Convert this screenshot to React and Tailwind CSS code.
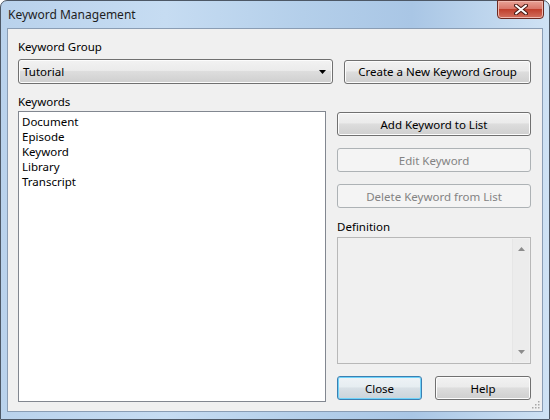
import React from "react";

const btn =
  "flex items-center justify-center rounded-[3px] border border-[#707070] bg-[linear-gradient(#f2f2f2_0%,#ebebeb_45%,#dddddd_50%,#cfcfcf_100%)] text-black shadow-[inset_0_0_0_1px_#fcfcfc]";
const btnOff =
  "flex items-center justify-center rounded-[3px] border border-[#adb2b5] bg-[#f4f4f4] text-[#838383]";

function Arrow({ up }) {
  return (
    <svg width="7" height="4" viewBox="0 0 7 4">
      <path d={up ? "M0 4 L3.5 0 L7 4 Z" : "M0 0 L3.5 4 L7 0 Z"} fill="#8c8c8c" />
    </svg>
  );
}

export default function App() {
  const keywords = ["Document", "Episode", "Keyword", "Library", "Transcript"];

  return (
    <div
      className="w-[550px] h-[420px] flex flex-col rounded-t-[7px] border border-[#4d5866] bg-[linear-gradient(to_right,#b9d2ec_0%,#c6dcf2_30%,#b4cfea_55%,#a9c6e5_75%,#cfe2f4_100%)] text-[11.5px] leading-[15px] text-black"
      style={{ fontFamily: '"Noto Sans", "Open Sans", sans-serif' }}
    >
      {/* title bar */}
      <div className="h-[27px] flex items-start justify-between pl-[7px] pr-[5px]">
        <span className="mt-[6px] text-[12px] text-[#1e1e1e]">Keyword Management</span>
        <div className="w-[47px] h-[19px] -mt-px flex items-center justify-center rounded-b-[4px] border border-[#6b2a22] bg-[linear-gradient(#e8a296_0%,#d9776a_45%,#c0402d_50%,#d2705f_100%)] shadow-[inset_0_0_0_1px_#f0b8ae]">
          <svg width="14" height="11" viewBox="0 0 14 11">
            <path d="M2 1.5 L12 9.5 M12 1.5 L2 9.5" stroke="#4a1a14" strokeWidth="4" strokeLinecap="round" />
            <path d="M2 1.5 L12 9.5 M12 1.5 L2 9.5" stroke="#ffffff" strokeWidth="2" strokeLinecap="round" />
          </svg>
        </div>
      </div>

      {/* client area */}
      <div className="relative mx-[6px] flex-1 border border-[#8a9db4] bg-[#f0f0f0] pl-[10px] pr-[11px] pt-[10px]">
        <div>Keyword Group</div>
        <div className="mt-[5px] flex items-center gap-[11px]">
          <div className={`${btn} w-[315px] h-[25px] !justify-between pl-[4px] pr-[6px]`}>
            <span>Tutorial</span>
            <svg width="7" height="4" viewBox="0 0 7 4">
              <path d="M0 0 L7 0 L3.5 4 Z" fill="#000" />
            </svg>
          </div>
          <div className={`${btn} w-[187px] h-[24px]`}>Create a New Keyword Group</div>
        </div>

        <div className="mt-[10px]">Keywords</div>
        <div className="mt-[2px] flex gap-[11px]">
          <div className="w-[308px] h-[291px] border border-[#828790] bg-white pl-[3px] pt-[2px]">
            {keywords.map((k) => (
              <div key={k}>{k}</div>
            ))}
          </div>

          <div className="w-[194px] flex flex-col">
            <div className={`${btn} mt-px h-[24px]`}>Add Keyword to List</div>
            <div className={`${btnOff} mt-[12px] h-[24px]`}>Edit Keyword</div>
            <div className={`${btnOff} mt-[12px] h-[24px]`}>Delete Keyword from List</div>
            <div className="mt-[11px]">Definition</div>
            <div className="mt-[3px] h-[127px] flex justify-end border border-[#b8b8b8] bg-[#f0f0f0] p-px">
              <div className="w-[17px] flex flex-col items-center justify-between border-l border-[#e6e6e6] bg-[#ececec] py-[8px]">
                <Arrow up />
                <Arrow />
              </div>
            </div>
            <div className="mt-[12px] flex justify-between">
              <div className="w-[85px] h-[24px] flex items-center justify-center rounded-[3px] border border-[#3c7fb1] bg-[linear-gradient(#eef3f6_0%,#e6edf1_45%,#d8e0e6_50%,#cbd4da_100%)] shadow-[inset_0_0_0_1px_#6fd3fa]">
                Close
              </div>
              <div className={`${btn} w-[96px] h-[24px]`}>Help</div>
            </div>
          </div>
        </div>

        {/* resize grip */}
        <svg className="absolute right-[2px] bottom-[2px]" width="9" height="9" viewBox="0 0 9 9">
          {[
            [7, 1],
            [4, 4],
            [7, 4],
            [1, 7],
            [4, 7],
            [7, 7],
          ].map(([x, y]) => (
            <rect key={`${x}-${y}`} x={x} y={y} width="1.5" height="1.5" fill="#a8a8a8" />
          ))}
        </svg>
      </div>
      <div className="h-[7px]" />
    </div>
  );
}
